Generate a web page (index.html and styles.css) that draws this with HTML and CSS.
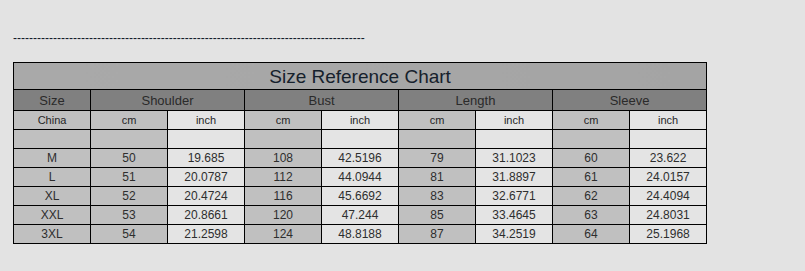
FILE: index.html
```html
<!DOCTYPE html>
<html>
<head>
<meta charset="utf-8">
<link rel="stylesheet" href="styles.css">
</head>
<body>
<div class="page">
  <div class="dashes">----------------------------------------------------------------------------------------</div>
  <table class="chart">
    <colgroup>
      <col><col><col><col><col><col><col><col><col>
    </colgroup>
    <tr class="title-row"><td colspan="9">Size Reference Chart</td></tr>
    <tr class="head-row">
      <td>Size</td>
      <td colspan="2">Shoulder</td>
      <td colspan="2">Bust</td>
      <td colspan="2">Length</td>
      <td colspan="2">Sleeve</td>
    </tr>
    <tr class="sub-row">
      <td class="dk">China</td>
      <td class="dk">cm</td><td class="lt">inch</td>
      <td class="dk">cm</td><td class="lt">inch</td>
      <td class="dk">cm</td><td class="lt">inch</td>
      <td class="dk">cm</td><td class="lt">inch</td>
    </tr>
    <tr class="blank-row">
      <td class="dk"></td>
      <td class="dk"></td><td class="lt"></td>
      <td class="dk"></td><td class="lt"></td>
      <td class="dk"></td><td class="lt"></td>
      <td class="dk"></td><td class="lt"></td>
    </tr>
    <tr class="data-row">
      <td class="dk">M</td><td class="dk">50</td><td class="lt">19.685</td><td class="dk">108</td><td class="lt">42.5196</td><td class="dk">79</td><td class="lt">31.1023</td><td class="dk">60</td><td class="lt">23.622</td>
    </tr>
    <tr class="data-row">
      <td class="dk">L</td><td class="dk">51</td><td class="lt">20.0787</td><td class="dk">112</td><td class="lt">44.0944</td><td class="dk">81</td><td class="lt">31.8897</td><td class="dk">61</td><td class="lt">24.0157</td>
    </tr>
    <tr class="data-row">
      <td class="dk">XL</td><td class="dk">52</td><td class="lt">20.4724</td><td class="dk">116</td><td class="lt">45.6692</td><td class="dk">83</td><td class="lt">32.6771</td><td class="dk">62</td><td class="lt">24.4094</td>
    </tr>
    <tr class="data-row">
      <td class="dk">XXL</td><td class="dk">53</td><td class="lt">20.8661</td><td class="dk">120</td><td class="lt">47.244</td><td class="dk">85</td><td class="lt">33.4645</td><td class="dk">63</td><td class="lt">24.8031</td>
    </tr>
    <tr class="data-row">
      <td class="dk">3XL</td><td class="dk">54</td><td class="lt">21.2598</td><td class="dk">124</td><td class="lt">48.8188</td><td class="dk">87</td><td class="lt">34.2519</td><td class="dk">64</td><td class="lt">25.1968</td>
    </tr>
  </table>
</div>
</body>
</html>
```

FILE: styles.css
```css
html, body {
  margin: 0;
  padding: 0;
  background: #e3e3e3;
}

.page {
  padding: 31px 13px 0 13px;
  font-family: "Liberation Sans", Arial, sans-serif;
}

.dashes {
  font-size: 12px;
  line-height: 14px;
  height: 14px;
  color: #101828;
  white-space: nowrap;
  overflow: hidden;
  width: 353px;
}

.chart {
  margin-top: 17px;
  border-collapse: collapse;
  table-layout: fixed;
  width: 694px;
}

.chart col {
  width: 77px;
}

.chart td {
  border: 1px solid #000;
  padding: 0;
  text-align: center;
  color: #333;
  overflow: hidden;
  white-space: nowrap;
}

.title-row td {
  font-size: 19px;
  color: #16212c;
  background: linear-gradient(to right, #a9a9a9, #a4a4a4);
  line-height: 25px;
  padding-top: 1px;
  height: 25px;
}

.head-row td {
  font-size: 13px;
  background: #808080;
  color: #2a2a2a;
  line-height: 19px;
  padding-top: 1px;
  height: 19px;
}

.sub-row td {
  height: 18px;
  font-size: 11px;
  line-height: 18px;
  color: #262626;
}

.blank-row td {
  height: 18px;
}

.data-row td {
  height: 18px;
  font-size: 12px;
  line-height: 18px;
  color: #2e2e2e;
}

.dk {
  background: #c0c0c0;
}

.lt {
  background: #e4e4e4;
}
```
